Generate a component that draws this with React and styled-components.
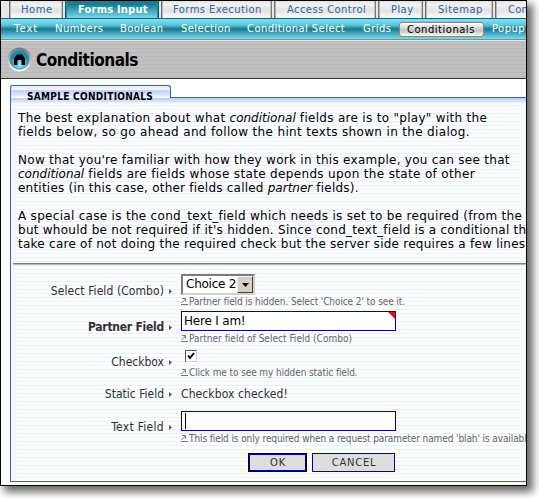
import React from "react";
import styled, { createGlobalStyle } from "styled-components";

const Global = createGlobalStyle`
  * { box-sizing: border-box; }
  body { margin: 0; background: #fff; font-family: "DejaVu Sans", Verdana, sans-serif; }
`;

const Page = styled.div`
  width: 100%; height: 498px; overflow: hidden; background: #fff;
`;

const Window = styled.div`
  width: 527px; height: 486px;
  border: 1px solid #000;
  background: #fff;
  box-shadow: 5px 5px 8px 1px rgba(0,0,0,.6);
  overflow: hidden;
`;

const Tabs = styled.nav`
  display: flex; height: 17px; width: 620px; padding-left: 8px;
  background: #e8e8e8;
`;

const Tab = styled.div`
  flex: none;
  width: ${(p) => p.$w - 2}px; height: 17px; margin-right: 2px; padding: 1px 0 0 ${(p) => p.$pad}px;
  border-left: 1px solid ${(p) => (p.$on ? "#0a5565" : "#6f6f6f")};
  border-right: 1px solid ${(p) => (p.$on ? "#0a5565" : "#777")};
  box-shadow: ${(p) => (p.$on ? "inset 1px 0 #2e8fa3, inset -1px 0 #2e8fa3" : "inset 1px 0 #b5b5b5, inset -1px 0 #c4c4c4")};
  background: ${(p) => p.$on
    ? "linear-gradient(#1b7b90 0 20%, #3c9db1 50%, #77d9ec)"
    : "linear-gradient(#e2e2e2, #f2f2f2 20%, #e2e2e2 55%, #fafafa)"};
  color: ${(p) => (p.$on ? "#fff" : "#336699")};
  font-size: 10px; line-height: 15px;
  font-weight: ${(p) => (p.$on ? 700 : 400)};
  letter-spacing: ${(p) => p.$ls}px; white-space: nowrap;
`;

const SubBar = styled.nav`
  display: flex; height: 22px; width: 620px; padding-left: 13px;
  border-top: 1px solid #0f6577; border-bottom: 1px solid #8b8b8b;
  background: linear-gradient(#7be4f8, #61c5d8 30%, #17788c 50%, #3fa4b9 70%, #7adcee);
`;

const SubItem = styled.span`
  flex: none; width: ${(p) => p.$w}px;
  color: #fff; font-size: 10px; line-height: 19px;
  letter-spacing: ${(p) => p.$ls ?? 0.42}px; white-space: nowrap;
`;

const SubCurrent = styled.span`
  flex: none; width: 85px; height: 15px; margin: 3px 8px 0 0; padding-left: 7px;
  border: 1px solid #8f8585; border-radius: 3px;
  background: linear-gradient(#fff, #cfcfcf 45%, #c6c6c6 60%, #fafafa);
  color: #000; font-size: 10px; line-height: 13px; letter-spacing: .5px; white-space: nowrap;
`;

const Header = styled.header`
  display: flex; align-items: center; height: 39px; padding-left: 6px;
  border-top: 1px solid #e6e6e6; border-bottom: 1px solid #303030;
  background: repeating-linear-gradient(#c0c0c0 0 3px, #b8b8b8 3px 4px);
`;

const Title = styled.h1`
  margin: 0 0 0 4px; font: bold 17px/38px "DejaVu Sans Condensed", "DejaVu Sans", sans-serif;
  font-stretch: condensed;
  letter-spacing: -.45px; color: #000;
`;

const Content = styled.main`
  height: 406px; padding: 6px 0 0 9px; overflow: hidden;
`;

const PanelTab = styled.div`
  position: relative; z-index: 1;
  width: 161px; height: 13px; padding-left: 16px;
  border: 1px solid #2a63cc; border-bottom: 0; border-radius: 3px 3px 0 0;
  background: linear-gradient(#e4ecff, #f0f4ff 30%, #bccdfa 40%, #dce6fd 75%, #fff);
  font: bold 10px/21px "DejaVu Sans Condensed", "DejaVu Sans", sans-serif;
  font-stretch: condensed;
  letter-spacing: .3px; white-space: nowrap; color: #000;
`;

const Panel = styled.section`
  width: 620px; height: 385px; margin-top: -1px;
  border: 1px solid #2a66d4;
  background:
    linear-gradient(#b5c9fc, rgba(232,240,255,0)) 0 0 / 100% 6px no-repeat,
    repeating-linear-gradient(#fdfdfd 0 3px, #e8f0ff 3px 4px);
`;

const Copy = styled.div`
  padding: 13px 0 0 7px; height: 165px;
  i { letter-spacing: 0; }
`;

const Line = styled.p`
  margin: 0; height: 14px; font-size: 12px; line-height: 14px; color: #000;
  letter-spacing: ${(p) => p.$ls ?? 0.3}px; white-space: nowrap;
`;

const Rule = styled.hr`
  margin: 0 0 0 2px; height: 2px; border: 0; border-top: 1px solid #7d7d7d; border-bottom: 1px solid #bcbcbc;
`;

const Row = styled.div`
  display: grid; grid-template-columns: 153px 1fr; column-gap: 17px;
  height: ${(p) => p.$h}px;
`;

const Label = styled.label`
  display: flex; justify-content: flex-end; align-items: center; gap: 5px;
  width: 161px; height: 16px; margin-top: ${(p) => p.$top}px;
  font: ${(p) => (p.$bold ? 700 : 400)} 12px/16px "DejaVu Sans Condensed", "DejaVu Sans", sans-serif;
  font-stretch: condensed;
  letter-spacing: ${(p) => p.$ls ?? 0}px; color: #303030; white-space: nowrap;
`;

const Arrow = styled.svg`
  flex: none; width: 3px; height: 5px; fill: #555;
`;

const Cell = styled.div`
  display: flex; flex-direction: column; align-items: flex-start;
  padding-top: ${(p) => p.$top ?? 0}px;
`;

const Hint = styled.div`
  display: flex; align-items: center; gap: 1px; height: 13px; margin-top: ${(p) => p.$top ?? 0}px;
  font: 10px/13px "DejaVu Sans Condensed", "DejaVu Sans", sans-serif;
  font-stretch: condensed;
  letter-spacing: ${(p) => p.$ls ?? -0.1}px; color: #666; white-space: nowrap;
`;

const Combo = styled.div`
  display: flex; justify-content: space-between;
  width: 74px; height: 21px; padding-left: 3px;
  border: 2px solid; border-color: #7b7b78 #d4d0c8 #d4d0c8 #7b7b78; background: #fff;
  font-size: 12px; line-height: 17px; letter-spacing: -.25px; white-space: nowrap;
`;

const ComboButton = styled.span`
  display: grid; place-items: center; width: 16px; height: 17px;
  background: #d4d0c8; border: 1px solid; border-color: #f4f4f4 #404040 #404040 #f4f4f4;
`;

const Input = styled.div`
  width: 215px; height: 20px; padding-left: 2px;
  border: 1px solid #000099; background: #fff;
  font-size: 12px; line-height: 19px; letter-spacing: -.2px;
  position: relative;
`;

const Corner = styled.svg`
  position: absolute; top: 0; right: 0; width: 7px; height: 7px;
`;

const Caret = styled.span`
  display: block; width: 1px; height: 16px; margin: 1px 0 0 1px; background: #000;
`;

const Check = styled.span`
  display: grid; place-items: center; width: 12px; height: 12px; margin: 1px 0 0 4px;
  border: 1px solid; border-color: #555 #d4d0c8 #d4d0c8 #555; background: #fff;
`;

const Static = styled.div`
  margin-top: 1px; font: 12px/16px "DejaVu Sans Condensed", "DejaVu Sans", sans-serif;
  font-stretch: condensed; color: #303030; letter-spacing: .1px;
`;

const Buttons = styled.div`
  display: flex; gap: 5px; padding-left: 237px;
`;

const Button = styled.button`
  width: ${(p) => p.$w}px; height: 19px; padding: 0 0 0 1px;
  border: 1px solid ${(p) => (p.$primary ? "#000" : "#000099")};
  box-shadow: ${(p) => (p.$primary ? "inset 0 0 0 1px #000099" : "none")};
  background: #ddd; color: #333; font: 10px/16px "DejaVu Sans", sans-serif; letter-spacing: .7px;
`;

const HomeIcon = () => (
  <svg width="25" height="27" viewBox="0 0 25 27">
    <defs>
      <linearGradient id="ring" x2="0" y2="1"><stop stopColor="#777" /><stop offset="1" stopColor="#fff" /></linearGradient>
      <radialGradient id="ball" cy=".75"><stop stopColor="#9beeff" /><stop offset="1" stopColor="#2688a0" /></radialGradient>
    </defs>
    <circle cx="12.500" cy="13.500" r="12" fill="url(#ring)" />
    <circle cx="12.500" cy="13.500" r="9.700" fill="url(#ball)" stroke="#4a9fb2" />
    <path d="M7 12.500 10 8.500h5l3 4V19h-3.500v-5h-4v5H7z" fill="#000" />
  </svg>
);

const Mark = () => (
  <Arrow viewBox="0 0 3 5"><path d="M0 0 3 2.500 0 5z" /></Arrow>
);

const HintIcon = () => (
  <svg width="7" height="7" viewBox="0 0 7 7" fill="none" stroke="#777">
    <path d="M0 6.500h7M1 .5h3.500v3M4.500 1 .5 5" />
  </svg>
);

const Help = ({ children, ...p }) => <Hint {...p}><HintIcon /><span>{children}</span></Hint>;

export default function App() {
  return (
    <Page>
      <Global />
      <Window>
        <Tabs>
          <Tab $w={56} $pad={11} $ls={0.5}>Home</Tab>
          <Tab $w={96} $pad={12} $ls={0.15} $on>Forms Input</Tab>
          <Tab $w={113} $pad={11} $ls={0.4}>Forms Execution</Tab>
          <Tab $w={104} $pad={12} $ls={0.4}>Access Control</Tab>
          <Tab $w={47} $pad={12} $ls={0.4}>Play</Tab>
          <Tab $w={70} $pad={12} $ls={0.5}>Sitemap</Tab>
          <Tab $w={90} $pad={12} $ls={0.2}>Con</Tab>
        </Tabs>
        <SubBar>
          <SubItem $w={41} $ls={1}>Text</SubItem>
          <SubItem $w={65}>Numbers</SubItem>
          <SubItem $w={61}>Boolean</SubItem>
          <SubItem $w={66}>Selection</SubItem>
          <SubItem $w={116}>Conditional Select</SubItem>
          <SubItem $w={36}>Grids</SubItem>
          <SubCurrent>Conditionals</SubCurrent>
          <SubItem $w={60}>Popup</SubItem>
        </SubBar>
        <Header><HomeIcon /><Title>Conditionals</Title></Header>
        <Content>
          <PanelTab>SAMPLE CONDITIONALS</PanelTab>
          <Panel>
            <Copy>
              <Line>The best explanation about what <i>conditional</i> fields are is to "play" with the</Line>
              <Line $ls={0.34}>fields below, so go ahead and follow the hint texts shown in the dialog.</Line>
              <Line />
              <Line $ls={0.28}>Now that you're familiar with how they work in this example, you can see that</Line>
              <Line $ls={0.34}><i>conditional</i> fields are fields whose state depends upon the state of other</Line>
              <Line $ls={0.22}>entities (in this case, other fields called <i>partner</i> fields).</Line>
              <Line />
              <Line>A special case is the cond_text_field which needs is set to be required (from the</Line>
              <Line $ls={0.26}>but whould be not required if it's hidden. Since cond_text_field is a conditional th</Line>
              <Line $ls={0.25}>take care of not doing the required check but the server side requires a few lines</Line>
            </Copy>
            <Rule />
            <Row $h={46}>
              <Label $top={18} $ls={0.08}>Select Field (Combo)<Mark /></Label>
              <Cell $top={9}>
                <Combo>Choice 2<ComboButton><svg width="7" height="4"><path d="M0 0h7L3.500 4z" /></svg></ComboButton></Combo>
                <Help>Partner field is hidden. Select 'Choice 2' to see it.</Help>
              </Cell>
            </Row>
            <Row $h={38}>
              <Label $top={8} $ls={-0.25} $bold>Partner Field<Mark /></Label>
              <Cell>
                <Input>Here I am!<Corner><path d="M0 0h7v7z" fill="red" /></Corner></Input>
                <Help $top={1} $ls={0.02}>Partner field of Select Field (Combo)</Help>
              </Cell>
            </Row>
            <Row $h={36}>
              <Label $top={5}>Checkbox<Mark /></Label>
              <Cell>
                <Check><svg width="8" height="8" viewBox="0 0 8 8"><path d="M1 3.500 3 6l4-5" fill="none" stroke="#000" strokeWidth="2" /></svg></Check>
                <Help $top={4}>Click me to see my hidden static field.</Help>
              </Cell>
            </Row>
            <Row $h={26}>
              <Label $top={1}>Static Field<Mark /></Label>
              <Cell><Static>Checkbox checked!</Static></Cell>
            </Row>
            <Row $h={42}>
              <Label $top={8} $ls={0.3}>Text Field<Mark /></Label>
              <Cell>
                <Input><Caret /></Input>
                <Help $top={1}>This field is only required when a request parameter named 'blah' is availabl</Help>
              </Cell>
            </Row>
            <Buttons><Button $w={59} $primary>OK</Button><Button $w={83}>CANCEL</Button></Buttons>
          </Panel>
        </Content>
      </Window>
    </Page>
  );
}
